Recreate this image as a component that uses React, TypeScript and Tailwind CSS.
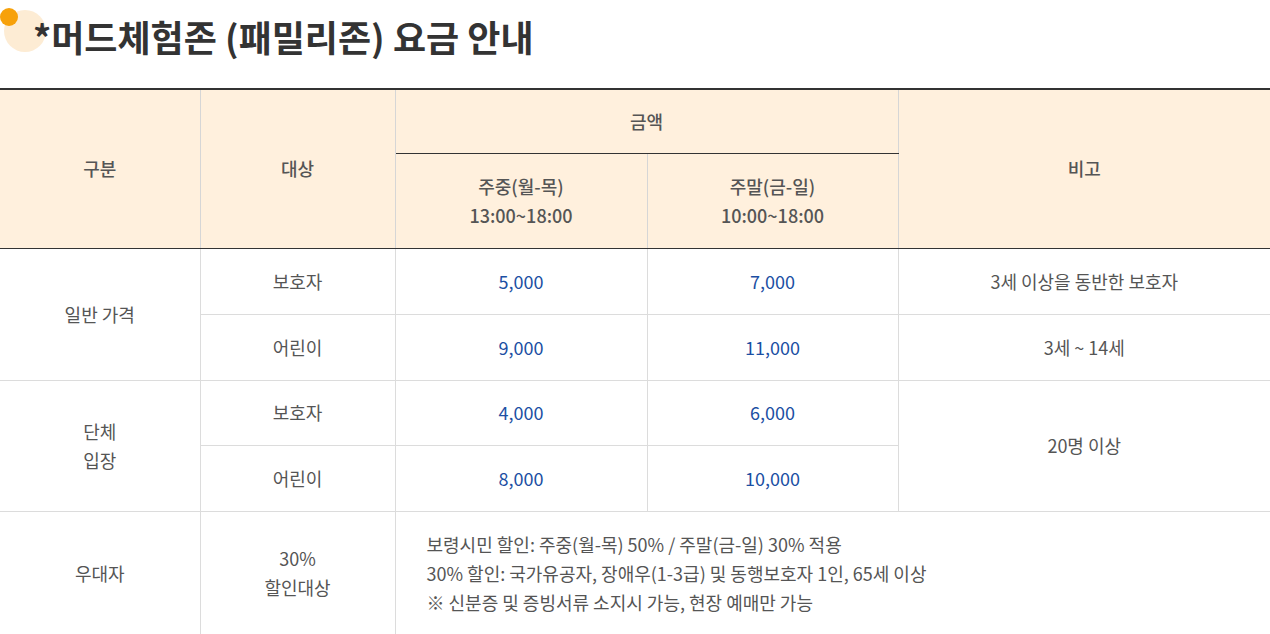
const font = "font-['Noto_Sans_CJK_KR','Noto_Sans',sans-serif]";

const Price = ({ v }: { v: string }) => (
  <td className="border border-[#dcdcdc] text-center text-[#1c4fa3]">{v}</td>
);

const App = () => {
  return (
    <div className={`${font} w-[1270px] bg-white text-[18px] text-[#555] overflow-hidden`}>
      <div className="relative h-[88px]">
        <span className="absolute left-[4px] top-[10px] w-[42px] h-[42px] rounded-full bg-[#fdecd4]" />
        <span className="absolute left-[0px] top-[8px] w-[18px] h-[18px] rounded-full bg-[#f7a10a]" />
        <h1 className="relative pl-[33px] pt-[12px] text-[36px] leading-[48px] font-bold text-[#333]">
          *머드체험존 (패밀리존) 요금 안내
        </h1>
      </div>
      <table className="w-full border-collapse table-fixed border-t-2 border-t-[#333]">
        <colgroup>
          <col className="w-[200px]" />
          <col className="w-[195px]" />
          <col className="w-[252px]" />
          <col className="w-[251px]" />
          <col />
        </colgroup>
        <thead className="bg-[#fff0dd] text-[#555]">
          <tr className="h-[64px]">
            <th rowSpan={2} className="border-l-0 border-r border-[#d6d6d6] border-b border-b-[#333] font-medium">구분</th>
            <th rowSpan={2} className="border-x border-[#d6d6d6] border-b border-b-[#333] font-medium">대상</th>
            <th colSpan={2} className="border-x border-x-[#d6d6d6] border-b border-b-[#333] font-medium">금액</th>
            <th rowSpan={2} className="border-l border-[#d6d6d6] border-b border-b-[#333] font-medium">비고</th>
          </tr>
          <tr className="h-[95px]">
            <th className="border-x border-[#d6d6d6] border-b border-b-[#333] font-medium leading-[29px]">
              주중(월-목)<br />13:00~18:00
            </th>
            <th className="border-x border-[#d6d6d6] border-b border-b-[#333] font-medium leading-[29px]">
              주말(금-일)<br />10:00~18:00
            </th>
          </tr>
        </thead>
        <tbody>
          <tr className="h-[66px]">
            <td rowSpan={2} className="border border-l-0 border-[#dcdcdc] text-center">일반 가격</td>
            <td className="border border-[#dcdcdc] text-center">보호자</td>
            <Price v="5,000" />
            <Price v="7,000" />
            <td className="border border-r-0 border-[#dcdcdc] text-center">3세 이상을 동반한 보호자</td>
          </tr>
          <tr className="h-[66px]">
            <td className="border border-[#dcdcdc] text-center">어린이</td>
            <Price v="9,000" />
            <Price v="11,000" />
            <td className="border border-r-0 border-[#dcdcdc] text-center">3세 ~ 14세</td>
          </tr>
          <tr className="h-[65px]">
            <td rowSpan={2} className="border border-l-0 border-[#dcdcdc] text-center leading-[29px]">
              단체<br />입장
            </td>
            <td className="border border-[#dcdcdc] text-center">보호자</td>
            <Price v="4,000" />
            <Price v="6,000" />
            <td rowSpan={2} className="border border-r-0 border-[#dcdcdc] text-center">20명 이상</td>
          </tr>
          <tr className="h-[66px]">
            <td className="border border-[#dcdcdc] text-center">어린이</td>
            <Price v="8,000" />
            <Price v="10,000" />
          </tr>
          <tr className="h-[124px]">
            <td className="border border-l-0 border-[#dcdcdc] text-center">우대자</td>
            <td className="border border-[#dcdcdc] text-center leading-[29px]">
              30%<br />할인대상
            </td>
            <td colSpan={3} className="border border-r-0 border-[#dcdcdc] pl-[31px] pt-0 leading-[29px]">
              보령시민 할인: 주중(월-목) 50% / 주말(금-일) 30% 적용<br />
              30% 할인: 국가유공자, 장애우(1-3급) 및 동행보호자 1인, 65세 이상<br />
              ※ 신분증 및 증빙서류 소지시 가능, 현장 예매만 가능
            </td>
          </tr>
        </tbody>
      </table>
    </div>
  );
};

export default App;
